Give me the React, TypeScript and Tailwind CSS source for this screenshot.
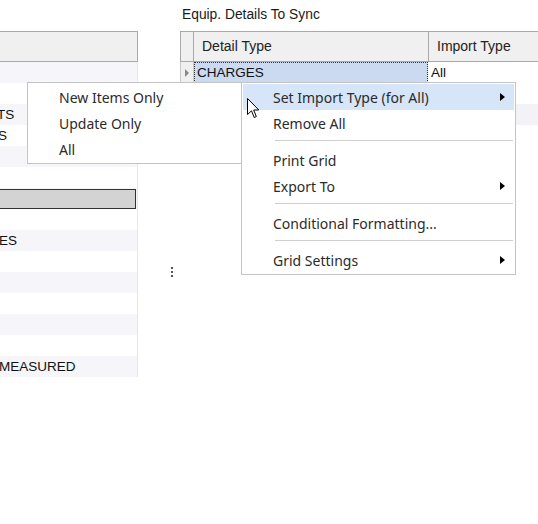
import React from "react";

const gridFont = "font-['Liberation_Sans',Arial,sans-serif]";
const menuFont = "font-['Noto_Sans','Open_Sans',sans-serif]";

type LeftRow = { text?: string; ml?: string; selected?: boolean };

const leftRows: LeftRow[] = [
  {},
  {},
  { text: "TS", ml: "-ml-[3px]" },
  { text: "S", ml: "-ml-[2px]" },
  {},
  {},
  { selected: true },
  {},
  { text: "ES", ml: "-ml-[1px]" },
  {},
  {},
  {},
  {},
  {},
  { text: "MEASURED", ml: "-ml-[1px]" },
];

function Arrow() {
  return (
    <span className="absolute right-[9px] top-1/2 -translate-y-1/2 w-0 h-0 border-y-[4px] border-y-transparent border-l-[5px] border-l-black" />
  );
}

function MenuItem({
  label,
  arrow,
  active,
}: {
  label: string;
  arrow?: boolean;
  active?: boolean;
}) {
  return (
    <div
      className={`relative h-[26px] flex items-center pl-[30px] pr-[9px] pt-px text-[14px] leading-none text-[#2b2b2b] whitespace-nowrap ${
        active ? "bg-[#d6e5f8]" : ""
      }`}
    >
      {label}
      {arrow && <Arrow />}
    </div>
  );
}

function Separator() {
  return (
    <div className="h-[11px] pt-[4px] pl-[32px] pr-[1px]">
      <div className="h-px bg-[#d0d0d0]" />
    </div>
  );
}

export default function App() {
  return (
    <div className="relative w-[538px] h-[524px] bg-white overflow-hidden">
      <div className="flex">
        {/* Left grid */}
        <div className={`w-[138px] pt-[31px] ${gridFont}`}>
          <div className="h-[31px] bg-[#f0f0f0] border-y border-r border-[#a9a9a9] w-[138px]" />
          {leftRows.map((r, i) => (
            <div
              key={i}
              className={`h-[21px] flex items-center pt-px border-r border-[#e6e6ec] overflow-hidden ${
                i % 2 === 0 ? "bg-[#f5f5fa]" : "bg-white"
              }`}
            >
              {r.selected ? (
                <div className="h-[20px] w-[137px] -ml-px -mt-px bg-[#d3d3d3] border border-[#333]" />
              ) : r.text ? (
                <span
                  className={`${r.ml} text-[13.5px] leading-none text-[#111] whitespace-nowrap`}
                >
                  {r.text}
                </span>
              ) : null}
            </div>
          ))}
        </div>

        {/* Splitter */}
        <div className="w-[42px] pt-[267px] pl-[33px]">
          <div className="flex flex-col gap-[2px]">
            <div className="w-[2px] h-[2px] bg-[#555]" />
            <div className="w-[2px] h-[2px] bg-[#555]" />
            <div className="w-[2px] h-[2px] bg-[#555]" />
          </div>
        </div>

        {/* Right grid */}
        <div className={`flex-1 ${gridFont}`}>
          <div className="h-[31px] flex items-center pl-[2px] text-[13.8px] text-[#1a1a1a]">
            Equip. Details To Sync
          </div>
          <div className="h-[31px] flex bg-[#f0f0f0] border-y border-l border-[#a9a9a9] text-[14px] text-[#222]">
            <div className="w-[13px] border-r border-[#a9a9a9]" />
            <div className="w-[235px] border-r border-[#a9a9a9] flex items-center pl-[8px]">
              Detail Type
            </div>
            <div className="flex-1 flex items-center pl-[8px]">Import Type</div>
          </div>
          <div className="h-[21px] flex text-[13.5px] text-[#111]">
            <div className="w-[14px] bg-[#f0f0f0] border-l border-r border-[#c8c8c8] flex items-center justify-center">
              <span className="w-0 h-0 border-y-[4px] border-y-transparent border-l-[4px] border-l-[#888]" />
            </div>
            <div className="w-[234px] bg-[#cbdaf1] border border-dotted border-[#333] flex items-center pl-[2px] pt-px">
              CHARGES
            </div>
            <div className="flex-1 flex items-center pl-[3px] pt-px bg-white">All</div>
          </div>
          <div className="h-[21px] bg-white" />
          <div className="h-[21px] bg-[#f3f3f7]" />
        </div>
      </div>

      {/* Submenu */}
      <div
        className={`absolute left-[27px] top-[82px] w-[216px] border border-[#c4c4c4] bg-white p-px ${menuFont}`}
      >
        <MenuItem label="New Items Only" />
        <MenuItem label="Update Only" />
        <MenuItem label="All" />
      </div>

      {/* Context menu */}
      <div
        className={`absolute left-[241px] top-[82px] w-[275px] border border-[#c4c4c4] bg-white p-px ${menuFont}`}
      >
        <MenuItem label="Set Import Type (for All)" arrow active />
        <MenuItem label="Remove All" />
        <Separator />
        <MenuItem label="Print Grid" />
        <MenuItem label="Export To" arrow />
        <Separator />
        <MenuItem label="Conditional Formatting..." />
        <Separator />
        <MenuItem label="Grid Settings" arrow />
      </div>

      {/* Cursor */}
      <svg
        className="absolute left-[247px] top-[98px]"
        width="13"
        height="21"
        viewBox="0 0 13 21"
      >
        <path
          d="M0.5 0.5 L0.5 16.5 L4.5 12.8 L7.2 19.5 L9.3 18.6 L6.7 12 L11.8 12 Z"
          fill="white"
          stroke="black"
          strokeWidth="1"
          strokeLinejoin="miter"
        />
      </svg>
    </div>
  );
}
